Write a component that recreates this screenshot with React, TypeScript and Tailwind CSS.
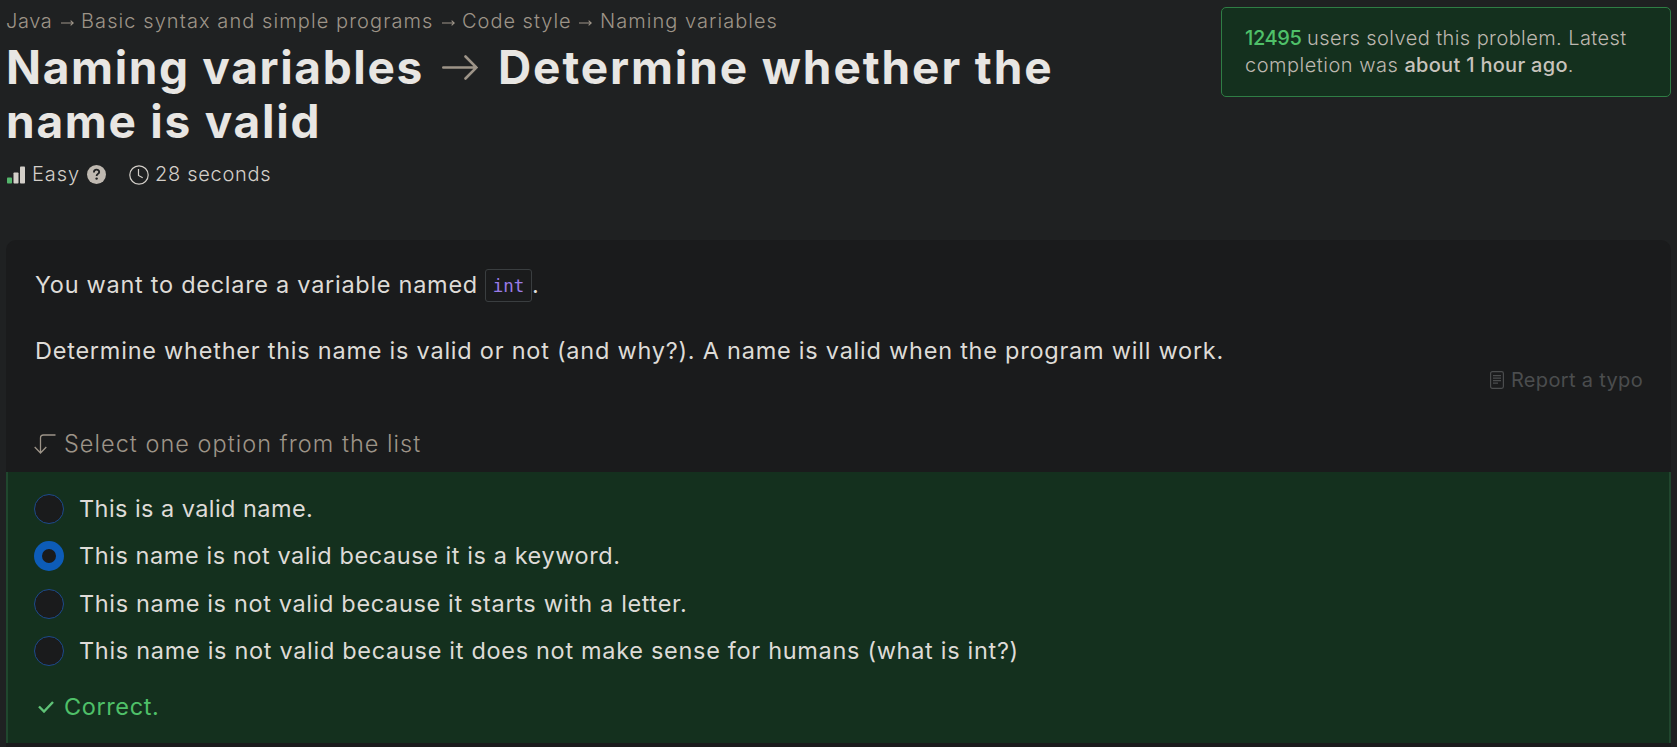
function CrumbArrow() {
  return (
    <svg className="mt-[3px] h-2 w-[13px] shrink-0" viewBox="0 0 13 8" fill="none" stroke="currentColor" strokeWidth="1.1">
      <path d="M0 4h12.2M9.6 1.6 12.3 4 9.6 6.4" />
    </svg>
  );
}

const options = [
  { text: 'This is a valid name.', checked: false, cls: 'tracking-[0.44px]' },
  { text: 'This name is not valid because it is a keyword.', checked: true, cls: 'tracking-[0.57px]' },
  { text: 'This name is not valid because it starts with a letter.', checked: false, cls: 'tracking-[0.65px]' },
  {
    text: 'This name is not valid because it does not make sense for humans (what is int?)',
    checked: false,
    cls: 'tracking-[0.69px]',
  },
];

function Header() {
  return (
    <header className="flex h-[181px] items-start justify-between">
      <div>
        <nav className="flex h-[27px] items-center whitespace-nowrap pt-px text-[20px] font-light leading-[27px] text-[#9d9488]">
          <span className="w-[55px] tracking-[0.6px]">Java</span>
          <CrumbArrow />
          <span className="ml-[7px] w-[361px] tracking-[1.08px]">Basic syntax and simple programs</span>
          <CrumbArrow />
          <span className="ml-[7px] w-[117px] tracking-[0.98px]">Code style</span>
          <CrumbArrow />
          <span className="ml-[8px] tracking-[1.04px]">Naming variables</span>
        </nav>
        <h1 className="mt-[6px] whitespace-nowrap text-[46px] font-bold leading-[54px] text-[#e8e6e3]">
          <span className="flex items-center">
            <span className="w-[436px] tracking-[1.65px]">Naming variables</span>
            <svg className="h-[26px] w-[36px]" viewBox="0 0 36 26" fill="none" stroke="#9d9488" strokeWidth="2.6" strokeLinecap="round">
              <path d="M1.3 13.5h33M23.5 2.5l11 11-11 11" />
            </svg>
            <span className="ml-[20px] tracking-[1.9px]">Determine whether the</span>
          </span>
          <span className="block tracking-[1.75px]">name is valid</span>
        </h1>
        <div className="mt-[13px] flex h-[27px] items-center pl-px text-[20px] font-light leading-[27px] text-[#d3cfc9]">
          <svg className="h-[18px] w-[18px]" viewBox="0 0 18 18">
            <rect x="0" y="11.5" width="5" height="6" rx="0.8" fill="#54b66c" />
            <rect x="6.5" y="6.5" width="5" height="11" rx="0.8" fill="#d3cfc9" />
            <rect x="13" y="0.5" width="5" height="17" rx="0.8" fill="#d3cfc9" />
          </svg>
          <span className="ml-[7px] w-[55px] tracking-[0.9px]">Easy</span>
          <svg className="h-[19px] w-[19px]" viewBox="0 0 19 19">
            <circle cx="9.5" cy="9.5" r="9.5" fill="#bfb9b1" />
            <path d="M6.9 7.4c0-3.7 5.3-3.5 5.3-.5 0 2-2.6 2-2.6 4.1" fill="none" stroke="#1f2122" strokeWidth="1.8" />
            <circle cx="9.6" cy="13.6" r="1.2" fill="#1f2122" />
          </svg>
          <svg className="ml-[23px] h-5 w-5" viewBox="0 0 20 20" fill="none" stroke="#d3cfc9" strokeWidth="1.2">
            <circle cx="10" cy="10" r="9.2" />
            <path d="M9.5 4v6.5l4.2 2.3" />
          </svg>
          <span className="ml-[6px] tracking-[0.7px]">28 seconds</span>
        </div>
      </div>
      <aside className="h-[90px] w-[450px] whitespace-nowrap rounded-[5px] border border-[#2f7d45] bg-[#14301e] px-[23px] py-[17px] text-[20px] font-light leading-[27px] text-[#bdb7af]">
        <div className="tracking-[0.42px]">
          <span className="inline-block w-[62px] font-medium tracking-[-0.4px] text-[#4fc069]">12495</span>
          users solved this problem. Latest
        </div>
        <div className="tracking-[0.3px]">
          <span className="tracking-[0.5px]">completion was </span>
          <span className="font-medium text-[#c8c3bc]">about 1 hour ago</span>.
        </div>
      </aside>
    </header>
  );
}

export default function App() {
  return (
    <div className="flex h-[747px] flex-col overflow-hidden bg-[#1f2122] px-[6px] pt-[7px] font-[Inter,sans-serif]">
      <Header />
      <main className="mt-[52px] flex-1 rounded-t-[10px] bg-[#1a1b1c]">
        <section className="h-[232px] px-[28px] pt-[28px] text-[23.5px] leading-[34px] text-[#dedbd7]">
          <p className="flex h-[34px] items-center pl-px">
            <span className="w-[450px] whitespace-nowrap tracking-[0.72px]">You want to declare a variable named</span>
            <code className="flex h-[33px] w-[47px] items-center justify-center rounded-[3px] border border-[#3a3e40] pt-px font-['DejaVu_Sans_Mono',monospace] text-[17.5px] text-[#9a7be6]">
              int
            </code>
            <span>.</span>
          </p>
          <p className="mt-[32px] whitespace-nowrap pl-px tracking-[0.76px]">
            Determine whether this name is valid or not (and why?). A name is valid when the program will work.
          </p>
          <div className="flex h-6 items-center justify-end text-[20px] leading-6 text-[#4b4d4e]">
            <svg className="mr-[7px] h-[18px] w-[14px]" viewBox="0 0 14 18" fill="none" stroke="currentColor" strokeWidth="1.2">
              <rect x="0.6" y="0.6" width="12.8" height="16.8" rx="1.8" />
              <path d="M3 4.7h8M3 7.2h8M3 9.7h8M3 12.2h5" />
            </svg>
            <span className="tracking-[0.33px]">Report a typo</span>
          </div>
          <div className="mt-[35px] flex items-center font-light text-[#9d9488]">
            <svg className="h-5 w-[22px]" viewBox="0 0 22 20" fill="none" stroke="currentColor" strokeWidth="1.3">
              <path d="M21.5 1H9.5Q6.5 1 6.5 4v15M.7 13l5.8 6 5.8-6" />
            </svg>
            <span className="ml-[8px] tracking-[1.02px]">Select one option from the list</span>
          </div>
        </section>
        <section className="h-[271px] border-x-2 border-[#20472e] bg-[#14301e] pl-[26px] pt-[22px] text-[23.5px] text-[#dedbd7]">
          <ul className="flex h-[172px] flex-col justify-between">
            {options.map((o) => (
              <li key={o.text} className="flex h-[30px] items-center">
                <span
                  className={
                    o.checked
                      ? 'h-[30px] w-[30px] rounded-full border-8 border-[#0d5cb8] bg-[#1a1b1c]'
                      : 'h-[30px] w-[30px] rounded-full border border-[#1d4a8c] bg-[#1a1b1c]'
                  }
                />
                <span className={`ml-[15px] whitespace-nowrap leading-[30px] ${o.cls}`}>{o.text}</span>
              </li>
            ))}
          </ul>
          <div className="mt-[24px] flex items-center leading-[34px] text-[#4fc069]">
            <svg className="ml-[4px] h-3 w-4" viewBox="0 0 16 12" fill="none" stroke="#5fc277" strokeWidth="2.4">
              <path d="M1 5.5l5 5L15 1" />
            </svg>
            <span className="ml-[10px] tracking-[0.6px]">Correct.</span>
          </div>
        </section>
      </main>
    </div>
  );
}
